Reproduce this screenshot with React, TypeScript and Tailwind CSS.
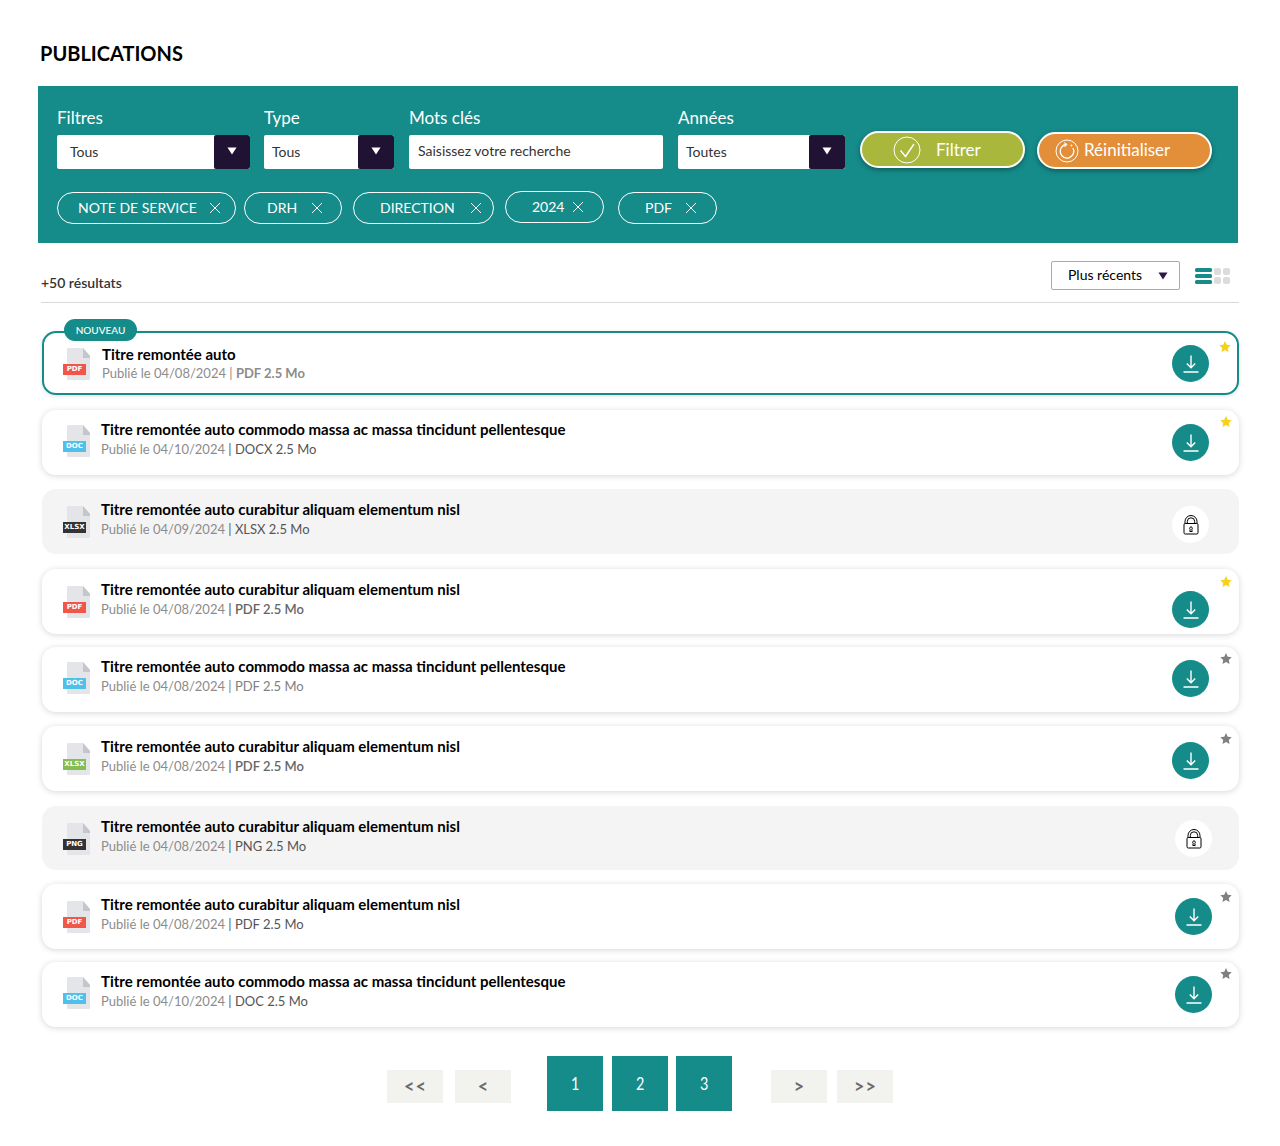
import React from 'react';

type Publication = {
    title: string;
    date: string;
    meta: string;
    metaClass: string;
    kind: string;
    kindClass: string;
    locked?: boolean;
    star?: 'gold' | 'gray';
    rowClass: string;
    iconClass: string;
    textClass: string;
    actionClass: string;
    starClass: string;
};

const LONG = 'Titre remontée auto commodo massa ac massa tincidunt pellentesque';
const MID = 'Titre remontée auto curabitur aliquam elementum nisl';

const publications: Publication[] = [
    { title: LONG, date: '04/10/2024', meta: 'DOCX 2.5 Mo', metaClass: 'text-[#555]', kind: 'DOC', kindClass: 'bg-[#4fc0ea]', star: 'gold', rowClass: 'mt-[15px] h-[65px]', iconClass: 'mt-[15px]', textClass: 'pt-[9px]', actionClass: 'mt-[14px] mr-[30px]', starClass: 'top-[6px]' },
    { title: MID, date: '04/09/2024', meta: 'XLSX 2.5 Mo', metaClass: 'text-[#555]', kind: 'XLSX', kindClass: 'bg-[#333]', locked: true, rowClass: 'mt-[14px] h-[65px]', iconClass: 'mt-[17px]', textClass: 'pt-[10px]', actionClass: 'mt-[17px] mr-[30px]', starClass: '' },
    { title: MID, date: '04/08/2024', meta: 'PDF 2.5 Mo', metaClass: 'text-[#666] font-semibold', kind: 'PDF', kindClass: 'bg-[#f0564a]', star: 'gold', rowClass: 'mt-[15px] h-[65px]', iconClass: 'mt-[17px]', textClass: 'pt-[10px]', actionClass: 'mt-[22px] mr-[30px]', starClass: 'top-[7px]' },
    { title: LONG, date: '04/08/2024', meta: 'PDF 2.5 Mo', metaClass: 'text-[#808080]', kind: 'DOC', kindClass: 'bg-[#4fc0ea]', star: 'gray', rowClass: 'mt-[13px] h-[65px]', iconClass: 'mt-[15px]', textClass: 'pt-[9px]', actionClass: 'mt-[13px] mr-[30px]', starClass: 'top-[6px]' },
    { title: MID, date: '04/08/2024', meta: 'PDF 2.5 Mo', metaClass: 'text-[#666] font-semibold', kind: 'XLSX', kindClass: 'bg-[#84bd50]', star: 'gray', rowClass: 'mt-[14px] h-[65px]', iconClass: 'mt-[17px]', textClass: 'pt-[10px]', actionClass: 'mt-[16px] mr-[30px]', starClass: 'top-[7px]' },
    { title: MID, date: '04/08/2024', meta: 'PNG 2.5 Mo', metaClass: 'text-[#555]', kind: 'PNG', kindClass: 'bg-[#333]', locked: true, rowClass: 'mt-[15px] h-[64px]', iconClass: 'mt-[17px]', textClass: 'pt-[10px]', actionClass: 'mt-[14px] mr-[27px]', starClass: '' },
    { title: MID, date: '04/08/2024', meta: 'PDF 2.5 Mo', metaClass: 'text-[#555]', kind: 'PDF', kindClass: 'bg-[#f0564a]', star: 'gray', rowClass: 'mt-[14px] h-[65px]', iconClass: 'mt-[17px]', textClass: 'pt-[10px]', actionClass: 'mt-[14px] mr-[27px]', starClass: 'top-[7px]' },
    { title: LONG, date: '04/10/2024', meta: 'DOC 2.5 Mo', metaClass: 'text-[#555]', kind: 'DOC', kindClass: 'bg-[#4fc0ea]', star: 'gray', rowClass: 'mt-[13px] h-[65px]', iconClass: 'mt-[15px]', textClass: 'pt-[9px]', actionClass: 'mt-[14px] mr-[27px]', starClass: 'top-[6px]' },
];

function CloseIcon() {
    return (
        <svg width="12" height="12" viewBox="0 0 12 12" fill="none" stroke="white" strokeWidth="1">
            <path d="M1 1l10 10M11 1L1 11" />
        </svg>
    );
}

function Caret({ className }: { className: string }) {
    return (
        <svg width="10" height="8" viewBox="0 0 10 8" className={className}>
            <path d="M0.5 0.5h9L5 7.5z" fill="currentColor" />
        </svg>
    );
}

function SelectBox({ label, value, widthClass, textClass }: { label: string; value: string; widthClass: string; textClass: string }) {
    return (
        <div className={widthClass}>
            <div className="h-[30px] pt-px text-[17px] leading-[24px] text-white">{label}</div>
            <div className="flex h-[34px] items-stretch overflow-hidden rounded-[2px] bg-white">
                <div className={`flex-1 pt-[8px] text-[14px] leading-[18px] text-[#333] ${textClass}`}>{value}</div>
                <div className="flex w-[36px] items-center justify-center rounded-[2px] bg-[#201232] text-white">
                    <Caret className="mb-[2px]" />
                </div>
            </div>
        </div>
    );
}

function Tag({ label, className }: { label: string; className: string }) {
    return (
        <div className={`flex h-[32px] items-center rounded-full border border-white text-[14px] text-white ${className}`}>
            <span className="mb-[2px]">{label}</span>
            <CloseIcon />
        </div>
    );
}

function FileIcon({ kind, kindClass }: { kind: string; kindClass: string }) {
    return (
        <div className="relative h-[32px] w-[28px] shrink-0">
            <svg width="24" height="32" viewBox="0 0 24 32" className="absolute left-[4px] top-0">
                <path d="M1 0h15l7 8v23a1 1 0 0 1-1 1H1a1 1 0 0 1-1-1V1a1 1 0 0 1 1-1z" fill="#e3e5e8" />
                <path d="M16 0l7 8v2h-7z" fill="#c3c6cb" />
            </svg>
            <div className={`absolute left-0 top-[16px] flex h-[11px] w-[23px] items-center justify-center font-['DejaVu_Sans',sans-serif] text-[7px] font-bold leading-none text-white ${kindClass}`}>
                {kind}
            </div>
        </div>
    );
}

function DownloadButton({ className }: { className: string }) {
    return (
        <div className={`flex h-[37px] w-[37px] shrink-0 items-center justify-center rounded-full bg-[#158c8a] ${className}`}>
            <svg width="16" height="20" viewBox="0 0 16 20" fill="none" stroke="white" strokeWidth="1.4">
                <path d="M8 1.5v12M3.8 9.5L8 13.8l4.2-4.3M0.5 18h15" />
            </svg>
        </div>
    );
}

function LockButton({ className }: { className: string }) {
    return (
        <div className={`flex h-[37px] w-[37px] shrink-0 items-center justify-center rounded-full bg-white ${className}`}>
            <svg width="16" height="20" viewBox="0 0 16 20" fill="none" stroke="#000" strokeWidth="1">
                <rect x="1" y="8.5" width="14" height="10.5" rx="1.2" />
                <path d="M2 8.500V6.500a6 6 0 0 1 12 0v2M4.300 8.500V6.500a3.700 3.700 0 0 1 7.400 0v2" />
                <path d="M6.800 16.500h2.400l-.4-2.300a1.300 1.300 0 1 0-1.600 0z" />
            </svg>
        </div>
    );
}

function Star({ color, className }: { color: string; className: string }) {
    return (
        <svg width="12" height="11" viewBox="0 0 24 23" className={`absolute ${className}`}>
            <path d="M12 0l3.600 7.800 8.400 1-6.200 5.800 1.600 8.400L12 18.800 4.600 23l1.600-8.400L0 8.800l8.400-1z" fill={color} />
        </svg>
    );
}

function Row({ item }: { item: Publication }) {
    return (
        <div className={`relative flex rounded-[14px] ${item.locked ? 'bg-[#f4f4f4]' : 'bg-white shadow-[0_1px_6px_rgba(0,0,0,0.16)]'} ${item.rowClass}`}>
            <div className={`ml-[21px] ${item.iconClass}`}>
                <FileIcon kind={item.kind} kindClass={item.kindClass} />
            </div>
            <div className={`ml-[10px] flex-1 ${item.textClass}`}>
                <div className="text-[15px] font-bold leading-[20px] text-black">{item.title}</div>
                <div className="text-[13px] leading-[20px] text-[#8c8c8c]">
                    Publié le {item.date} <span className={item.metaClass}>| {item.meta}</span>
                </div>
            </div>
            {item.locked ? <LockButton className={item.actionClass} /> : <DownloadButton className={item.actionClass} />}
            {item.star && <Star color={item.star === 'gold' ? '#f7d117' : '#808080'} className={`right-[7px] ${item.starClass}`} />}
        </div>
    );
}

function PageButton({ label, className }: { label: string; className: string }) {
    return (
        <div className={`mt-[14px] flex h-[33px] w-[56px] items-center justify-center bg-[#f2f3ef] text-[18px] font-bold tracking-[1px] text-[#6f6a68] ${className}`}>
            <span className="pl-px">{label}</span>
        </div>
    );
}

function PageNumber({ label, className }: { label: string; className: string }) {
    return (
        <div className={`flex h-[55px] w-[56px] items-center justify-center bg-[#158c8a] text-[18px] text-white ${className}`}>
            <span className="inline-block scale-x-[0.8]">{label}</span>
        </div>
    );
}

export default function App() {
    return (
        <div className="min-h-[1146px] bg-white font-['Lato','Liberation_Sans',sans-serif]">
            <div className="ml-[39px] w-[1201px] pt-[39px]">
                <h1 className="ml-px text-[20px] font-bold leading-[28px] text-black">PUBLICATIONS</h1>

                <div className="-ml-px mt-[19px] h-[157px] w-[1200px] bg-[#158c8a] pl-[19px] pt-[19px]">
                    <div className="flex">
                        <SelectBox label="Filtres" value="Tous" widthClass="w-[193px]" textClass="pl-[13px]" />
                        <div className="ml-[14px]">
                            <SelectBox label="Type" value="Tous" widthClass="w-[130px]" textClass="pl-[8px]" />
                        </div>
                        <div className="ml-[15px] w-[254px]">
                            <div className="h-[30px] pt-px text-[17px] leading-[24px] text-white">Mots clés</div>
                            <div className="h-[34px] rounded-[2px] bg-white pl-[9px] pt-[7px] text-[14px] leading-[18px] text-[#333]">Saisissez votre recherche</div>
                        </div>
                        <div className="ml-[15px]">
                            <SelectBox label="Années" value="Toutes" widthClass="w-[167px]" textClass="pl-[8px]" />
                        </div>
                        <button className="ml-[15px] mt-[26px] flex h-[37px] w-[165px] items-center rounded-full border-2 border-white bg-[#a9b83c] pl-[31px] text-[17px] text-white shadow-[0_2px_5px_rgba(0,0,0,0.35)]">
                            <svg width="28" height="28" viewBox="0 0 28 28" fill="none" stroke="white" strokeWidth="1">
                                <circle cx="14" cy="14" r="13" />
                                <path d="M7.500 14.500l5 6L21 8" strokeWidth="1.400" />
                            </svg>
                            <span className="ml-[15px]">Filtrer</span>
                        </button>
                        <button className="ml-[12px] mt-[27px] flex h-[37px] w-[175px] items-center rounded-full border-2 border-white bg-[#e38f3a] pl-[16px] text-[17px] text-white shadow-[0_2px_5px_rgba(0,0,0,0.35)]">
                            <svg width="24" height="24" viewBox="0 0 24 24" fill="none" stroke="white" strokeWidth="1">
                                <circle cx="12" cy="12" r="11" />
                                <path d="M11 5.500a6.800 6.800 0 1 0 7 3.500" strokeWidth="1.300" />
                                <path d="M9 3.500l3 2-2.500 2.500" />
                                <circle cx="16.500" cy="6.500" r="0.600" fill="white" />
                            </svg>
                            <span className="ml-[5px] mb-[2px]">Réinitialiser</span>
                        </button>
                    </div>
                    <div className="mt-[23px] flex items-start">
                        <Tag label="NOTE DE SERVICE" className="w-[179px] gap-[12px] pl-[20px]" />
                        <Tag label="DRH" className="ml-[8px] w-[98px] gap-[14px] pl-[22px]" />
                        <Tag label="DIRECTION" className="ml-[11px] w-[141px] gap-[15px] pl-[26px]" />
                        <Tag label="2024" className="ml-[11px] -mt-px w-[99px] gap-[8px] pl-[26px]" />
                        <Tag label="PDF" className="ml-[14px] w-[99px] gap-[13px] pl-[26px]" />
                    </div>
                </div>

                <div className="ml-[2px] flex h-[60px] w-[1198px] items-start justify-between border-b border-[#d9d9d9]">
                    <div className="mt-[31px] text-[14px] font-semibold leading-[18px] text-[#333]">+50 résultats</div>
                    <div className="mr-[8px] mt-[18px] flex items-center">
                        <div className="flex h-[29px] w-[129px] items-center rounded-[2px] border border-[#aaa] pl-[16px] text-[14px] text-black">
                            <span className="mb-[2px]">Plus récents</span>
                            <Caret className="ml-[16px] text-[#2b1a45]" />
                        </div>
                        <svg width="36" height="18" viewBox="0 0 36 18" className="ml-[15px]">
                            <rect x="0" y="1" width="17" height="4" rx="1.5" fill="#158c8a" />
                            <rect x="0" y="7" width="17" height="4" rx="1.5" fill="#158c8a" />
                            <rect x="0" y="13" width="17" height="4" rx="1.5" fill="#158c8a" />
                            <rect x="19" y="1" width="7" height="7" rx="2" fill="#dcdcdc" />
                            <rect x="28" y="1" width="7" height="7" rx="2" fill="#dcdcdc" />
                            <rect x="19" y="10" width="7" height="7" rx="2" fill="#dcdcdc" />
                            <rect x="28" y="10" width="7" height="7" rx="2" fill="#dcdcdc" />
                        </svg>
                    </div>
                </div>

                <div className="ml-[3px] mt-[28px] w-[1197px]">
                    <div className="relative flex h-[64px] rounded-[14px] border-2 border-[#158c8a] bg-white shadow-[0_1px_4px_rgba(0,0,0,0.12)]">
                        <div className="absolute left-[20px] top-[-14px] flex h-[22px] w-[73px] items-center justify-center rounded-full bg-[#158c8a] text-[10px] font-medium text-white">NOUVEAU</div>
                        <div className="ml-[19px] mt-[15px]">
                            <FileIcon kind="PDF" kindClass="bg-[#f0564a]" />
                        </div>
                        <div className="ml-[11px] flex-1 pt-[11px]">
                            <div className="text-[15px] font-bold leading-[20px] text-black">Titre remontée auto</div>
                            <div className="text-[13px] leading-[18px] text-[#8c8c8c]">
                                Publié le 04/08/2024 | <span className="font-bold">PDF 2.5 Mo</span>
                            </div>
                        </div>
                        <DownloadButton className="mt-[12px] mr-[28px]" />
                        <Star color="#f7d117" className="right-[6px] top-[8px]" />
                    </div>
                    {publications.map((item, i) => (
                        <Row key={i} item={item} />
                    ))}
                </div>

                <div className="mt-[29px] flex items-start pl-[348px]">
                    <PageButton label="<<" className="" />
                    <PageButton label="<" className="ml-[12px]" />
                    <PageNumber label="1" className="ml-[36px]" />
                    <PageNumber label="2" className="ml-[9px]" />
                    <PageNumber label="3" className="ml-[8px]" />
                    <PageButton label=">" className="ml-[39px]" />
                    <PageButton label=">>" className="ml-[10px]" />
                </div>
            </div>
        </div>
    );
}
